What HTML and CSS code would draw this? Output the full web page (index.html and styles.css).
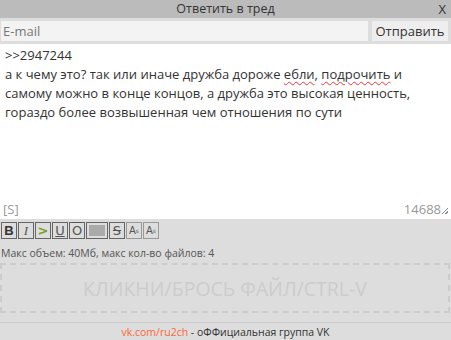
FILE: index.html
```html
<!DOCTYPE html>
<html lang="ru">
<head>
  <meta charset="UTF-8" />
  <title>Ответить в тред</title>
  <link rel="stylesheet" href="styles.css">
</head>
<body>
  <div class="okno">
    <div class="shapka">
      <span class="zagolovok">Ответить в тред</span>
      <span class="zakryt">X</span>
    </div>

    <div class="stroka">
      <input type="text" class="pochta" placeholder="E-mail" />
      <button type="button" class="otpravit">Отправить</button>
    </div>

    <div class="pole">
      <div class="tekst">&gt;&gt;2947244<br>а к чему это? так или иначе дружба дороже <span class="oshibka">ебли</span>, <span class="oshibka">подрочить</span> и самому можно в конце концов, а дружба это высокая ценность, гораздо более возвышенная чем отношения по сути</div>
      <div class="niz">
        <span class="sage">[S]</span>
        <span class="schet">14688<span class="ugol"></span></span>
      </div>
    </div>

    <div class="knopki">
      <span class="kn kn-b">B</span>
      <span class="kn kn-i">I</span>
      <span class="kn kn-q">&gt;</span>
      <span class="kn kn-u">U</span>
      <span class="kn kn-o">O</span>
      <span class="kn kn-spoiler"><span></span></span>
      <span class="kn kn-s">S</span>
      <span class="kn kn-sup">A<sup>s</sup></span>
      <span class="kn kn-sub">A<sub>s</sub></span>
    </div>

    <div class="limit">Макс объем: 40Мб, макс кол-во файлов: 4</div>

    <div class="fajly">КЛИКНИ/БРОСЬ ФАЙЛ/CTRL-V</div>

    <div class="podval"><a href="#">vk.com/ru2ch</a> - оФФициальная группа VK</div>
  </div>
</body>
</html>
```

FILE: styles.css
```css
body {
  margin: 0;
  font-family: "Open Sans", "DejaVu Sans", sans-serif;
  background: #dddddd;
  color: #333;
}

.okno {
  width: 451px;
  height: 340px;
  background: #dddddd;
  overflow: hidden;
}

.shapka {
  position: relative;
  height: 18px;
  line-height: 18px;
  background: #bbbbbb;
  text-align: center;
  font-size: 12.5px;
  color: #333;
}

.zakryt {
  position: absolute;
  right: 5px;
  top: 0;
  font-size: 13px;
}

.stroka {
  display: flex;
  gap: 4px;
  padding: 3px 3px 3px 1px;
  height: 20px;
}

.pochta {
  flex: 1;
  border: none;
  background: #f3f3f3;
  font-family: inherit;
  font-size: 13px;
  padding: 0 2px;
  color: #333;
}

.pochta::placeholder {
  color: #777;
}

.otpravit {
  width: 76px;
  border: none;
  background: #eeeeee;
  font-family: inherit;
  font-size: 13px;
  color: #333;
  padding: 0;
}

.pole {
  background: #fff;
  height: 175px;
  display: flex;
  flex-direction: column;
  justify-content: space-between;
}

.tekst {
  padding: 2px 5px;
  font-size: 13px;
  line-height: 19px;
  color: #333;
}

.oshibka {
  text-decoration: underline wavy #e33;
  text-decoration-thickness: 1px;
  text-underline-offset: 2px;
}

.niz {
  display: flex;
  justify-content: space-between;
  align-items: flex-end;
  padding: 0 3px 1px 3px;
  font-size: 13px;
  color: #999;
}

.ugol {
  display: inline-block;
  width: 6px;
  height: 6px;
  margin-left: 1px;
  background: linear-gradient(135deg, transparent 45%, #888 45%, #888 55%, transparent 55%, transparent 75%, #888 75%, #888 85%, transparent 85%);
}

.knopki {
  display: flex;
  gap: 1px;
  padding: 3px 0 0 1px;
  height: 17px;
}

.kn {
  box-sizing: border-box;
  width: 16px;
  height: 17px;
  border: 1px solid #666;
  display: flex;
  align-items: center;
  justify-content: center;
  font-family: "DejaVu Sans", sans-serif;
  font-size: 13px;
  color: #555;
  line-height: 1;
}

.kn-b { font-weight: bold; font-family: "Liberation Sans", sans-serif; color: #333; }
.kn-i { font-style: italic; font-family: "Liberation Serif", serif; }
.kn-q { color: #7a9d1e; font-weight: bold; }
.kn-u { text-decoration: underline; }
.kn-o { text-decoration: overline; }
.kn-s { text-decoration: line-through; }

.kn-spoiler {
  width: 22px;
  padding: 2px;
}

.kn-spoiler span {
  display: block;
  width: 100%;
  height: 100%;
  background: #aaa;
}

.kn-sup, .kn-sub {
  font-size: 10px;
  border-color: #999;
}

.kn sup, .kn sub {
  font-size: 6px;
}

.limit {
  font-size: 10.5px;
  color: #555;
  padding: 7px 0 0 1px;
  height: 16px;
}

.fajly {
  box-sizing: border-box;
  height: 50px;
  margin: 1px 1px 0 0;
  border: 2px dashed #cccccc;
  display: flex;
  align-items: center;
  justify-content: center;
  font-size: 19.5px;
  color: #cccccc;
}

.podval {
  margin-top: 9px;
  border-top: 1px solid #cccccc;
  text-align: center;
  font-size: 10.5px;
  line-height: 18px;
  color: #333;
}

.podval a {
  color: #ff6633;
  text-decoration: none;
}
```
